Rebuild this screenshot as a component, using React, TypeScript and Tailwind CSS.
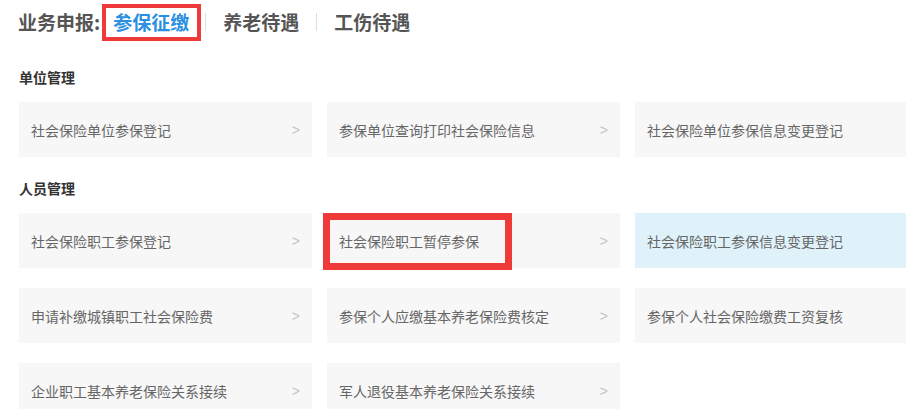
import React from 'react';

type Item = {
  title: string;
  active?: boolean;
  marked?: boolean;
};

const unitItems: Item[] = [
  { title: '社会保险单位参保登记' },
  { title: '参保单位查询打印社会保险信息' },
  { title: '社会保险单位参保信息变更登记' },
];

const personItems: Item[] = [
  { title: '社会保险职工参保登记' },
  { title: '社会保险职工暂停参保', marked: true },
  { title: '社会保险职工参保信息变更登记', active: true },
  { title: '申请补缴城镇职工社会保险费' },
  { title: '参保个人应缴基本养老保险费核定' },
  { title: '参保个人社会保险缴费工资复核' },
  { title: '企业职工基本养老保险关系接续' },
  { title: '军人退役基本养老保险关系接续' },
];

const ServiceCard: React.FC<{ item: Item; showArrow: boolean }> = ({ item, showArrow }) => (
  <div
    className={`relative flex items-center justify-between h-[55px] pl-[12px] pr-[12px] text-[14px] text-[#666] ${
      item.active ? 'bg-[#dff2fa]' : 'bg-[#f7f7f7]'
    }`}
  >
    <span className="leading-[20px]">{item.title}</span>
    {/* the last column runs past the window edge, so its arrow is never seen */}
    {showArrow && (
      <span className="font-['Liberation_Sans',sans-serif] text-[14px] text-[#c4c4c4] leading-[20px]">&gt;</span>
    )}
    {/* red annotation frame */}
    {item.marked && (
      <div className="absolute -left-[4px] top-0 w-[189px] h-[57px] border-[7px] border-[#f03a3a] pointer-events-none" />
    )}
  </div>
);

const Section: React.FC<{ title: string; items: Item[]; className?: string }> = ({ title, items, className }) => (
  <div className={className}>
    <h3 className="text-[14px] leading-[20px] font-bold text-[#333]">{title}</h3>
    <div className="mt-[15px] grid grid-cols-[293px_293px_293px] gap-x-[15px] gap-y-[20px]">
      {items.map((item, i) => (
        <ServiceCard key={item.title} item={item} showArrow={i % 3 !== 2} />
      ))}
    </div>
  </div>
);

const App: React.FC = () => {
  return (
    <div className="w-[906px] h-[409px] overflow-hidden bg-white font-['Microsoft_YaHei','Noto_Sans_CJK_SC',sans-serif]">
      {/* Header tabs */}
      <div className="flex items-center h-[44px] pl-[18px] text-[19px] leading-[28px] font-bold text-[#555]">
        <span>业务申报:</span>
        <span className="relative ml-[13px] text-[#2b8fe3]">
          参保征缴
          <span className="absolute -left-[11px] -right-[12px] -top-[4px] -bottom-[5px] border-4 border-[#f03a3a]" />
        </span>
        <span className="ml-[16px] mr-[17px] w-px h-[18px] bg-[#ddd]" />
        <span>养老待遇</span>
        <span className="mx-[17px] w-px h-[18px] bg-[#ddd]" />
        <span>工伤待遇</span>
      </div>

      <div className="pl-[19px]">
        <Section title="单位管理" items={unitItems} className="mt-[23px]" />
        <Section title="人员管理" items={personItems} className="mt-[21px]" />
      </div>
    </div>
  );
};

export default App;
